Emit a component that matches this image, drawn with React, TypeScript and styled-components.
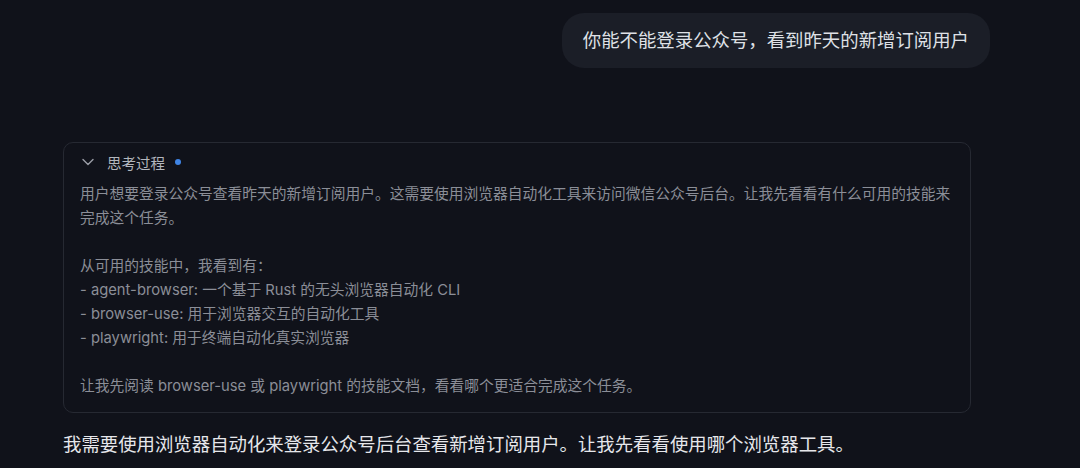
import React from "react";
import styled, { createGlobalStyle } from "styled-components";

const GlobalStyle = createGlobalStyle`
  html, body {
    margin: 0;
    padding: 0;
    background: #10121a;
  }
  body {
    font-family: "Inter", "Noto Sans CJK SC", "Noto Sans", sans-serif;
    -webkit-font-smoothing: antialiased;
  }
`;

const Page = styled.div`
  width: 1080px;
  height: 468px;
  box-sizing: border-box;
  padding: 13px 90px 0 63px;
  overflow: hidden;
`;

const UserRow = styled.div`
  display: flex;
  justify-content: flex-end;
`;

const Bubble = styled.div`
  height: 55px;
  padding: 0 21px;
  border-radius: 22px;
  background: #1b1e27;
  color: #dfe1e6;
  font-size: 18.4px;
  line-height: 55px;
`;

const ThinkBox = styled.section`
  margin-top: 74px;
  width: 908px;
  box-sizing: border-box;
  border: 1px solid #262932;
  border-radius: 10px;
  padding: 9px 16px 14px;
`;

const ThinkHeader = styled.div`
  display: flex;
  align-items: center;
  height: 20px;
  color: #b3b6bd;
  font-size: 14.5px;
`;

const Chevron = styled.svg`
  width: 12px;
  height: 12px;
  margin-left: 2px;
  margin-right: 13px;
  color: #9a9da6;
`;

const Dot = styled.span`
  width: 6px;
  height: 6px;
  border-radius: 50%;
  background: #3f84e5;
  margin-left: 10px;
`;

const ThinkBody = styled.div`
  margin-top: 10px;
  color: #8b8e97;
  font-size: 14.75px;
  line-height: 24px;
  white-space: pre-wrap;
`;

const Answer = styled.p`
  margin: 17px 0 0;
  color: #e6e7eb;
  font-size: 18.4px;
  line-height: 28px;
`;

const thoughts = `用户想要登录公众号查看昨天的新增订阅用户。这需要使用浏览器自动化工具来访问微信公众号后台。让我先看看有什么可用的技能来完成这个任务。

从可用的技能中，我看到有：
- agent-browser: 一个基于 Rust 的无头浏览器自动化 CLI
- browser-use: 用于浏览器交互的自动化工具
- playwright: 用于终端自动化真实浏览器

让我先阅读 browser-use 或 playwright 的技能文档，看看哪个更适合完成这个任务。`;

export default function App() {
  return (
    <>
      <GlobalStyle />
      <Page>
        <UserRow>
          <Bubble>你能不能登录公众号，看到昨天的新增订阅用户</Bubble>
        </UserRow>
        <ThinkBox>
          <ThinkHeader>
            <Chevron viewBox="0 0 12 12" fill="none">
              <path
                d="M1 3.5 6 8.5 11 3.5"
                stroke="currentColor"
                strokeWidth="1.4"
                strokeLinecap="round"
                strokeLinejoin="round"
              />
            </Chevron>
            思考过程
            <Dot />
          </ThinkHeader>
          <ThinkBody>{thoughts}</ThinkBody>
        </ThinkBox>
        <Answer>
          我需要使用浏览器自动化来登录公众号后台查看新增订阅用户。让我先看看使用哪个浏览器工具。
        </Answer>
      </Page>
    </>
  );
}
